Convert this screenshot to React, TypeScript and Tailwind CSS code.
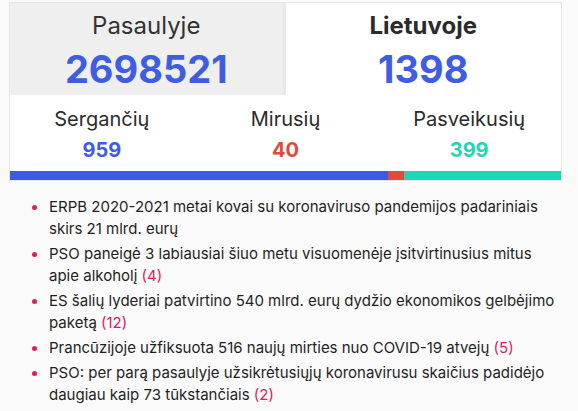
import React from "react";

const news: { text: string; count?: number }[] = [
  { text: "ERPB 2020-2021 metai kovai su koronaviruso pandemijos padariniais skirs 21 mlrd. eurų" },
  { text: "PSO paneigė 3 labiausiai šiuo metu visuomenėje įsitvirtinusius mitus apie alkoholį", count: 4 },
  { text: "ES šalių lyderiai patvirtino 540 mlrd. eurų dydžio ekonomikos gelbėjimo paketą", count: 12 },
  { text: "Prancūzijoje užfiksuota 516 naujų mirties nuo COVID-19 atvejų", count: 5 },
  { text: "PSO: per parą pasaulyje užsikrėtusiųjų koronavirusu skaičius padidėjo daugiau kaip 73 tūkstančiais", count: 2 },
];

export default function App() {
  return (
    <div className="min-h-[411px] w-[578px] bg-[#fafafa] pt-[2px]" style={{ fontFamily: "Inter, 'Noto Sans', sans-serif" }}>
      <div className="ml-[9px] w-[553px] border border-[#e6e6e6] bg-white">
        <div className="grid grid-cols-2">
          <div className="flex h-[92px] flex-col items-center bg-[#efefef] pt-[7px] border-r-[3px] border-[#e8e8e8]">
            <div className="text-[24px] leading-[32px] text-[#333]">Pasaulyje</div>
            <div className="mt-[4px] text-[38px] font-bold leading-[46px] text-[#3f5de3]">2698521</div>
          </div>
          <div className="flex h-[92px] flex-col items-center pt-[7px]">
            <div className="text-[24px] font-bold leading-[32px] text-[#2b2b2b]">Lietuvoje</div>
            <div className="mt-[4px] text-[38px] font-bold leading-[46px] text-[#3f5de3]">1398</div>
          </div>
        </div>
        <div className="grid grid-cols-3 pt-[10px]">
          <div className="flex flex-col items-center">
            <div className="text-[20px] leading-[28px] text-[#2b2b2b]">Sergančių</div>
            <div className="mt-[4px] text-[20px] font-bold leading-[26px] text-[#3f5de3]">959</div>
          </div>
          <div className="flex flex-col items-center">
            <div className="text-[20px] leading-[28px] text-[#2b2b2b]">Mirusių</div>
            <div className="mt-[4px] text-[20px] font-bold leading-[26px] text-[#e04a3c]">40</div>
          </div>
          <div className="flex flex-col items-center">
            <div className="text-[20px] leading-[28px] text-[#2b2b2b]">Pasveikusių</div>
            <div className="mt-[4px] text-[20px] font-bold leading-[26px] text-[#22d6b5]">399</div>
          </div>
        </div>
        <div className="mt-[8px] flex h-[9px]">
          <div className="h-full bg-[#3d5ae6]" style={{ width: "68.6%" }} />
          <div className="h-full bg-[#e24b3b]" style={{ width: "2.9%" }} />
          <div className="h-full flex-1 bg-[#1fd6b6]" />
        </div>
      </div>
      <ul className="mt-[15px] pl-[49px] pr-[20px] text-[15px] leading-[22px] text-[#1f1f1f]">
        {news.map((n, i) => (
          <li key={i} className="relative mb-[3px]">
            <span className="absolute left-[-17px] top-[9px] h-[5px] w-[5px] rounded-full bg-[#e8185a]" />
            {n.text}
            {n.count !== undefined && <span className="text-[#e8185a]"> ({n.count})</span>}
          </li>
        ))}
      </ul>
    </div>
  );
}
